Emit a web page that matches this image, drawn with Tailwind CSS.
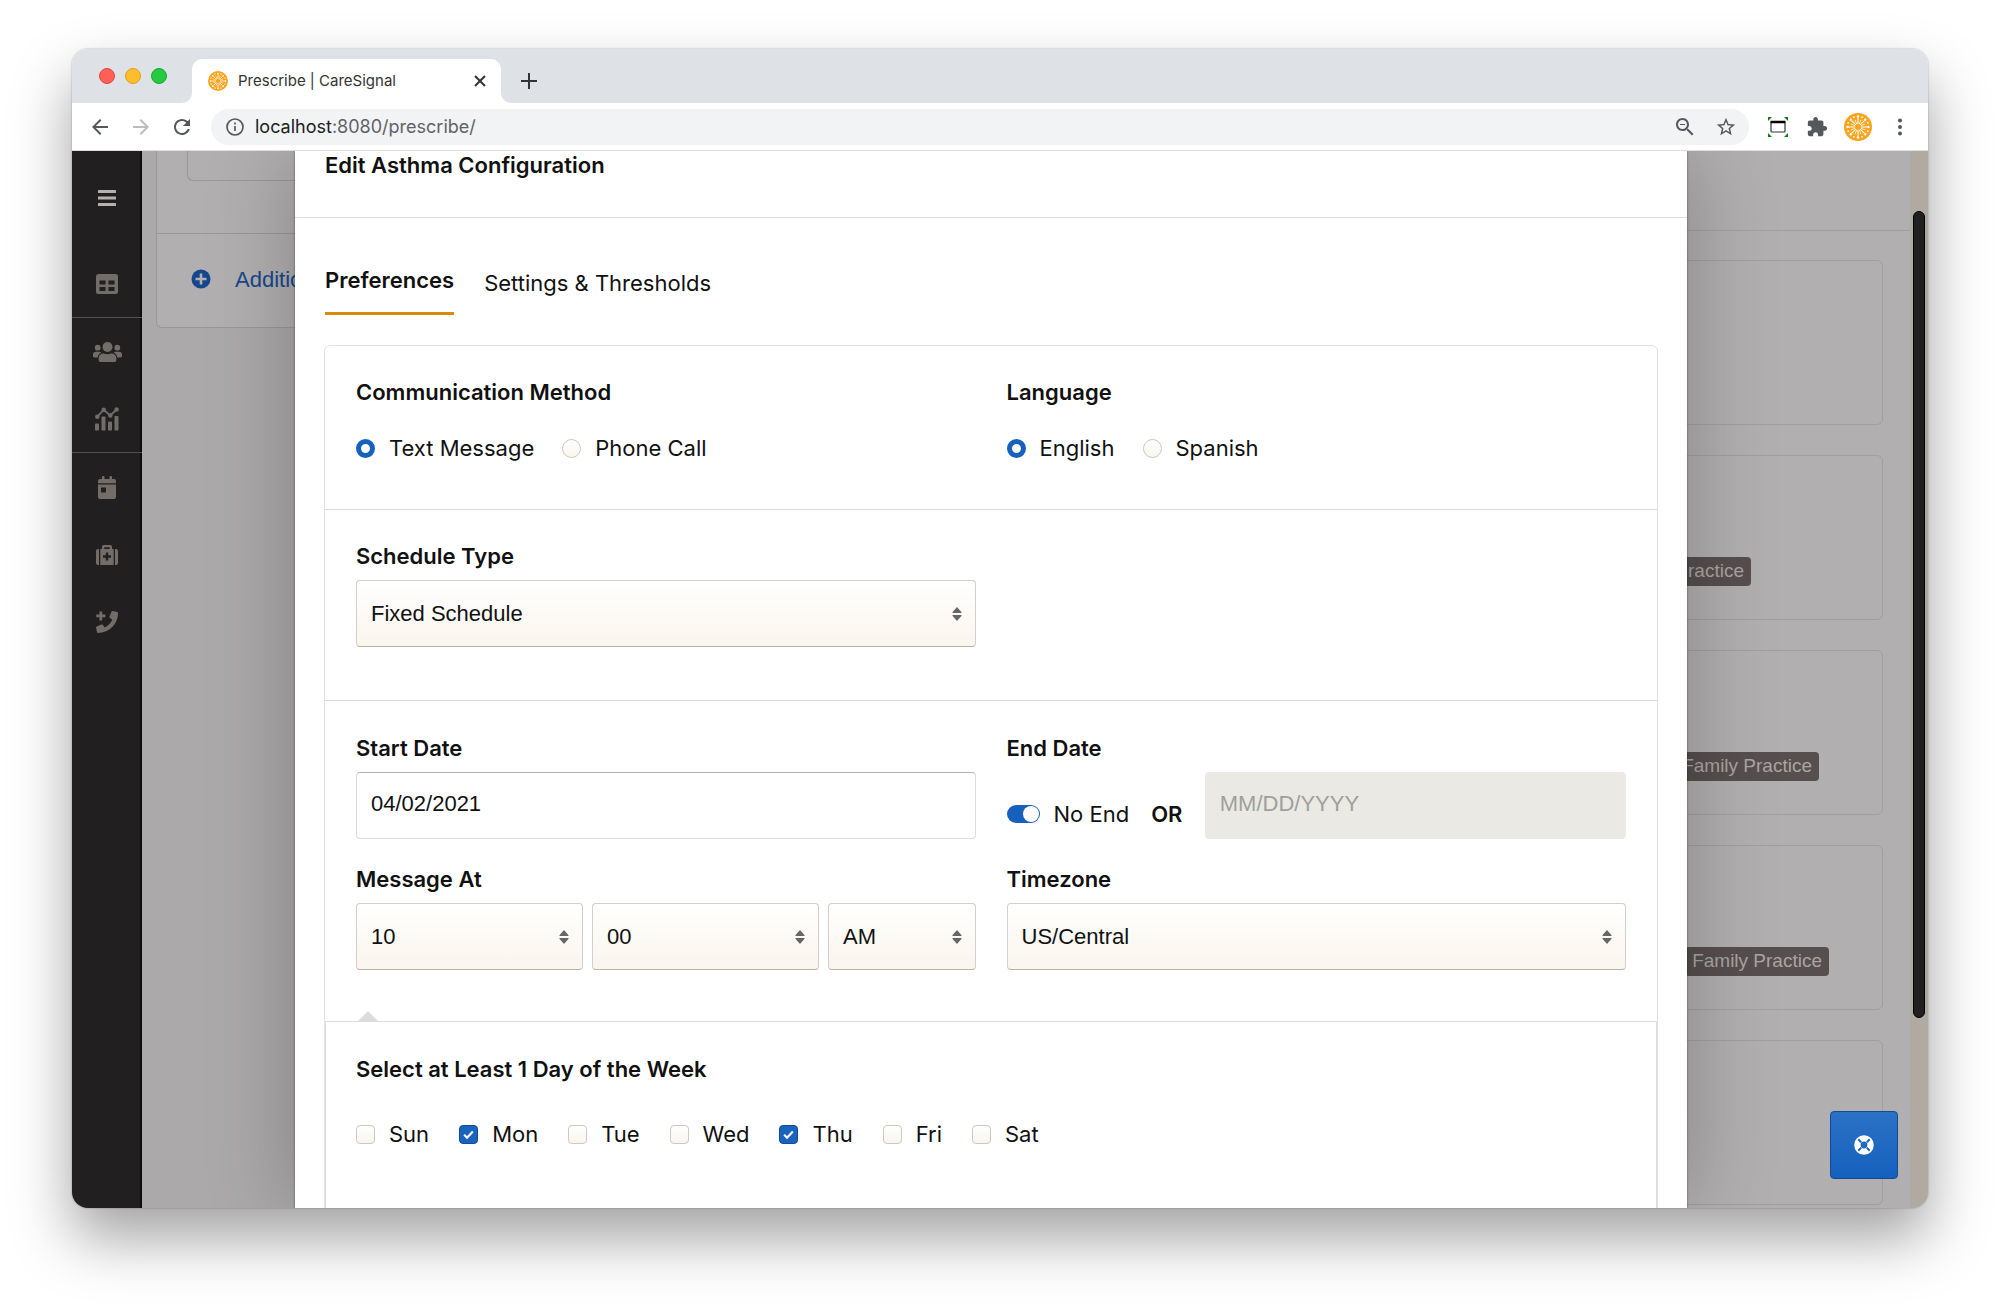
<!DOCTYPE html>
<html lang="en">
<head>
    <meta charset="UTF-8">
    <meta name="viewport" content="width=device-width, initial-scale=1.0">
    <title>Prescribe | CareSignal</title>
    <script src="https://cdn.jsdelivr.net/npm/@tailwindcss/browser@4"></script>
</head>
<body class="bg-white font-['Inter',sans-serif] text-[#111]">

    <!-- Shared icons -->
    <svg class="hidden">
        <symbol id="logo" viewBox="0 0 28 28">
            <circle cx="14" cy="14" r="14" fill="#fba31c"/>
            <path d="M14 4v7M14 17v7M4 14h7M17 14h7M7.600 7.600l4.300 4.300M16.100 16.100l4.300 4.300M20.400 7.600l-4.300 4.300M11.900 16.100l-4.300 4.300" stroke="#fff" stroke-width="1.100"/>
            <path d="M11 6.800l1.800 4.400M17 6.800l-1.800 4.400M11 21.200l1.800-4.400M17 21.200l-1.800-4.400M6.800 11l4.400 1.800M6.800 17l4.400-1.800M21.200 11l-4.400 1.800M21.200 17l-4.400-1.800" stroke="#fff" stroke-width=".8"/>
            <g fill="#fff">
                <circle cx="14" cy="3.500" r="1.200"/><circle cx="14" cy="24.500" r="1.200"/><circle cx="3.500" cy="14" r="1.200"/><circle cx="24.500" cy="14" r="1.200"/>
                <circle cx="6.800" cy="6.800" r="1.200"/><circle cx="21.200" cy="6.800" r="1.200"/><circle cx="6.800" cy="21.200" r="1.200"/><circle cx="21.200" cy="21.200" r="1.200"/>
                <circle cx="9.800" cy="4.200" r=".9"/><circle cx="18.200" cy="4.200" r=".9"/><circle cx="9.800" cy="23.800" r=".9"/><circle cx="18.200" cy="23.800" r=".9"/>
                <circle cx="4.200" cy="9.800" r=".9"/><circle cx="4.200" cy="18.200" r=".9"/><circle cx="23.800" cy="9.800" r=".9"/><circle cx="23.800" cy="18.200" r=".9"/>
            </g>
        </symbol>
        <symbol id="sort" viewBox="0 0 10 14">
            <path d="M5 0l4.600 5.200q.3.800-.6.800H1Q.1 6 .4 5.200zM5 14l4.600-5.200Q9.900 8 9 8H1q-.9 0-.6.800z" fill="#666"/>
        </symbol>
        <symbol id="check" viewBox="0 0 12 12">
            <path d="M2 6.300l2.700 2.700L10 3.300" fill="none" stroke="#fff" stroke-width="2"/>
        </symbol>
    </svg>

    <div class="min-h-screen flex flex-col px-18 pt-[49px] pb-24">
        <div class="flex-1 flex flex-col rounded-[16px] overflow-hidden shadow-[0_0_2px_rgba(0,0,0,0.35),0_30px_60px_rgba(0,0,0,0.37)]">

            <!-- Tab strip -->
            <div class="flex h-[54px] bg-white">
                <div class="flex items-center gap-2.5 w-[120px] pl-[27px] bg-[#dee1e6] rounded-br-[10px]">
                    <span class="size-4 rounded-full bg-[#ff5f57] border border-[#e2463f]"></span>
                    <span class="size-4 rounded-full bg-[#febc2e] border border-[#e1a116]"></span>
                    <span class="size-4 rounded-full bg-[#28c840] border border-[#12ac28]"></span>
                </div>
                <div class="w-[309px] pt-2.5 bg-[#dee1e6]">
                    <div class="flex items-center h-full pl-4 pr-3.5 bg-white rounded-t-[10px]">
                        <svg class="size-5 mr-2.5"><use href="#logo"/></svg>
                        <span class="text-[15px] text-[#333]">Prescribe | CareSignal</span>
                        <button class="ml-auto" aria-label="Close tab">
                            <svg class="size-3.5" viewBox="0 0 14 14" stroke="#333" stroke-width="2"><path d="M2 2l10 10M12 2L2 12"/></svg>
                        </button>
                    </div>
                </div>
                <div class="flex-1 flex items-center pt-2.5 pl-5 bg-[#dee1e6] rounded-bl-[10px]">
                    <button aria-label="New tab">
                        <svg class="size-4" viewBox="0 0 16 16" stroke="#333" stroke-width="2"><path d="M8 0v16M0 8h16"/></svg>
                    </button>
                </div>
            </div>

            <!-- Toolbar -->
            <div class="flex items-center gap-[17px] h-12 px-4 bg-white border-b border-[#dcdee0]">
                <button aria-label="Back"><svg class="size-6 block" viewBox="0 0 24 24" fill="#54585d"><path d="M20 11H7.830l5.590-5.590L12 4l-8 8 8 8 1.410-1.410L7.830 13H20v-2z"/></svg></button>
                <button aria-label="Forward"><svg class="size-6 block" viewBox="0 0 24 24" fill="#babcbe"><path d="M4 13h12.170l-5.590 5.590L12 20l8-8-8-8-1.410 1.410L16.170 11H4v2z"/></svg></button>
                <button aria-label="Reload"><svg class="size-6 block" viewBox="0 0 24 24" fill="#54585d"><path d="M17.650 6.350C16.200 4.900 14.210 4 12 4c-4.420 0-7.990 3.580-7.990 8s3.570 8 7.990 8c3.730 0 6.840-2.550 7.730-6h-2.080c-.82 2.330-3.040 4-5.650 4-3.310 0-6-2.690-6-6s2.690-6 6-6c1.660 0 3.140.69 4.220 1.780L13 11h7V4l-2.350 2.350z"/></svg></button>
                <div class="flex-1 flex items-center h-9 pl-3.5 pr-3 rounded-full bg-[#f1f3f4]">
                    <svg class="size-5 mr-2.5" viewBox="0 0 20 20" fill="none" stroke="#54585d" stroke-width="1.700"><circle cx="10" cy="10" r="8"/><path d="M10 9v5M10 5.600v1.800"/></svg>
                    <span class="text-[18px] text-[#5f6368]"><span class="text-[#202124]">localhost</span>:8080/prescribe/</span>
                    <svg class="size-6 ml-auto mr-4.5" viewBox="0 0 24 24" fill="#54585d"><path d="M15.500 14h-.79l-.28-.27C15.410 12.590 16 11.110 16 9.500 16 5.910 13.090 3 9.500 3S3 5.910 3 9.500 5.910 16 9.500 16c1.610 0 3.090-.59 4.230-1.570l.27.28v.79l5 4.990L20.490 19l-4.990-5zm-6 0C7.010 14 5 11.990 5 9.500S7.010 5 9.500 5 14 7.010 14 9.500 11.990 14 9.500 14zM7 9h5v1H7z"/></svg>
                    <svg class="size-[22px]" viewBox="0 0 24 24" fill="#54585d"><path d="M22 9.240l-7.190-.62L12 2 9.190 8.630 2 9.240l5.460 4.730L5.820 21 12 17.270 18.180 21l-1.630-7.030L22 9.240zM12 15.400l-3.760 2.270 1-4.280-3.320-2.880 4.380-.38L12 6.100l1.710 4.040 4.380.38-3.320 2.880 1 4.280L12 15.400z"/></svg>
                </div>
                <div class="flex items-center gap-4">
                    <svg class="size-6" viewBox="0 0 24 24"><path d="M2 2h4L2 6zM22 2h-4l4 4zM2 22h4l-4-4zM22 22h-4l4-4z" fill="#117a11"/><rect x="5" y="7" width="14" height="10" rx="1" fill="#fff" stroke="#333" stroke-width="1.200"/><path d="M4.500 7h15" stroke="#000" stroke-width="2.400"/></svg>
                    <svg class="size-5.5" viewBox="0 0 24 24" fill="#54585d"><path d="M20.500 11H19V7c0-1.100-.9-2-2-2h-4V3.500C13 2.120 11.880 1 10.500 1S8 2.120 8 3.500V5H4c-1.100 0-1.990.9-1.990 2v3.800H3.500c1.490 0 2.700 1.210 2.700 2.700s-1.210 2.700-2.700 2.700H2V20c0 1.100.9 2 2 2h3.800v-1.500c0-1.490 1.210-2.700 2.700-2.700 1.490 0 2.700 1.210 2.700 2.700V22H17c1.100 0 2-.9 2-2v-4h1.500c1.380 0 2.500-1.120 2.500-2.500S21.880 11 20.500 11z"/></svg>
                    <svg class="size-7"><use href="#logo"/></svg>
                    <button aria-label="Menu"><svg class="size-6 block" viewBox="0 0 24 24" fill="#54585d"><circle cx="12" cy="5.500" r="2"/><circle cx="12" cy="12" r="2"/><circle cx="12" cy="18.500" r="2"/></svg></button>
                </div>
            </div>

            <!-- Page -->
            <div class="relative flex-1 flex overflow-hidden bg-[#aba9aa]">
                <nav class="w-[70px] shrink-0 flex flex-col bg-[#221f20] shadow-[inset_-2px_0_0_#0c0b0b] text-[#736d6a]">
                    <a href="#" class="h-[94px] mb-1.5 grid place-items-center" aria-label="Menu">
                        <svg class="w-[18px] h-4" viewBox="0 0 18 16" fill="#b5b1b0"><rect width="18" height="3" rx=".5"/><rect y="6.500" width="18" height="3" rx=".5"/><rect y="13" width="18" height="3" rx=".5"/></svg>
                    </a>
                    <a href="#" class="h-[67px] grid place-items-center border-b border-[#555051]" aria-label="Dashboard">
                        <svg class="w-[22px] h-5" viewBox="0 0 22 20"><rect width="22" height="20" rx="2.500" fill="currentColor"/><path d="M3.500 6.500h6v4h-6zM12.500 6.500h6v4h-6zM3.500 13h6v4h-6zM12.500 13h6v4h-6z" fill="#221f20"/></svg>
                    </a>
                    <a href="#" class="h-[68px] grid place-items-center" aria-label="Patients">
                        <svg class="w-[29px] h-5" viewBox="0 0 29 20" fill="currentColor"><circle cx="14.500" cy="5" r="5"/><circle cx="4.700" cy="5.700" r="2.900"/><circle cx="24.300" cy="5.700" r="2.900"/><path d="M5.600 18v-1.500c0-3 2.300-5 5-5h.5c2.200 1 4.600 1 6.800 0h.5c2.700 0 5 2 5 5V18a2 2 0 0 1-2 2H7.600a2 2 0 0 1-2-2zM0 14v-1.500A3 3 0 0 1 3 9.700h3c1 0 1.600.3 2.300.9-2 1-3.300 2.700-3.600 4.900H1.300A1.400 1.400 0 0 1 0 14zM29 14v-1.500a3 3 0 0 0-3-2.800h-3c-1 0-1.600.3-2.300.9 2 1 3.300 2.700 3.600 4.900h3.400A1.400 1.400 0 0 0 29 14z"/></svg>
                    </a>
                    <a href="#" class="h-[67px] grid place-items-center border-b border-[#555051]" aria-label="Reports">
                        <svg class="size-6" viewBox="0 0 24 24" fill="currentColor"><rect y="16.500" width="4" height="7" rx=".8"/><rect x="6.500" y="9.500" width="4" height="14" rx=".8"/><rect x="13" y="14.500" width="4" height="9" rx=".8"/><rect x="19.500" y="9" width="4" height="14.500" rx=".8"/><circle cx="2.300" cy="9.700" r="2.200"/><circle cx="8.700" cy="2.800" r="2.200"/><circle cx="15.300" cy="8.500" r="2.200"/><circle cx="21.600" cy="2.500" r="2.200"/><path d="M2.300 9.700l6.400-6.900 6.600 5.700 6.300-6" fill="none" stroke="currentColor" stroke-width="1.800"/></svg>
                    </a>
                    <a href="#" class="h-[68px] grid place-items-center" aria-label="Calendar">
                        <svg class="w-[18px] h-[23px]" viewBox="0 0 18 23"><path d="M2 3h2V.7q0-.7.7-.7h1.100q.7 0 .7.700V3h5V.7q0-.7.7-.7h1.100q.7 0 .7.700V3h2a2 2 0 0 1 2 2v2.300H0V5a2 2 0 0 1 2-2zM0 8.500h18V21a2 2 0 0 1-2 2H2a2 2 0 0 1-2-2z" fill="currentColor"/><rect x="3" y="11.500" width="5" height="5" fill="#221f20"/></svg>
                    </a>
                    <a href="#" class="h-[67px] grid place-items-center" aria-label="Programs">
                        <svg class="w-[22px] h-5" viewBox="0 0 22 20"><path d="M0 6q0-2 2-2h1v16H2q-2 0-2-2zM22 6q0-2-2-2h-1v16h1q2 0 2-2zM4.300 4H6V1.800Q6 0 7.800 0h6.400Q16 0 16 1.800V4h1.700v16H4.300zM8.300 4h5.400V2.300H8.300z" fill="currentColor"/><path d="M9.800 7.500h2.400v2.800H15v2.400h-2.800v2.800H9.800v-2.800H7v-2.400h2.800z" fill="#221f20"/></svg>
                    </a>
                    <a href="#" class="h-[67px] grid place-items-center" aria-label="Calls">
                        <svg class="size-[22px]" viewBox="0 0 512 512" fill="currentColor"><path d="M493.400 24.600l-104-24c-11.300-2.600-22.900 3.300-27.500 13.900l-48 112c-4.200 9.800-1.400 21.300 6.900 28l60.600 49.600c-36 76.700-98.900 140.500-177.200 177.200l-49.600-60.600c-6.800-8.300-18.200-11.100-28-6.900l-112 48C3.900 366.500-2 378.100.6 389.400l24 104C27.100 504.200 36.700 512 48 512c256.100 0 464-207.500 464-464 0-11.200-7.700-20.900-18.600-23.400z"/><path d="M80 10h64v74h74v64h-74v74H80v-74H6V84h74z"/></svg>
                    </a>
                </nav>

                <!-- Page behind the dialog -->
                <div class="flex-1 pl-3.5 font-['Liberation_Sans',sans-serif]">
                    <div class="h-[177px] bg-[#b1afb0] border-x border-b border-[#999798] rounded-b-[6px]">
                        <div class="h-[83px] pl-[30px] border-b border-[#999798]">
                            <div class="h-[30px] border-l border-b border-[#999798] rounded-bl-[6px]"></div>
                        </div>
                        <a href="#" class="flex items-center gap-6 h-[90px] pl-[34px] text-[22px] text-[#16478c]">
                            <svg class="size-5" viewBox="0 0 20 20"><circle cx="10" cy="10" r="9.500" fill="#16478c"/><path d="M10 4.500v11M4.500 10h11" stroke="#b1afb0" stroke-width="2.600"/></svg>
                            Additional
                        </a>
                    </div>
                </div>
                <div class="flex-1 bg-[#b1afb0] font-['Liberation_Sans',sans-serif] text-[19px] text-[#aaa5a1]">
                    <div class="h-20 border-b border-[#a09e9f]"></div>
                    <div class="flex flex-col gap-[30px] pt-[29px] pr-[27px]">
                        <div class="h-[165px] rounded-[6px] border border-[#a09e9f]"></div>
                        <div class="h-[165px] rounded-[6px] border border-[#a09e9f] flex items-end justify-end pb-[33px] pr-[131px]">
                            <span class="px-[7px] pb-0.5 leading-[27px] rounded-[4px] bg-[#574f4f]">Family Practice</span>
                        </div>
                        <div class="h-[165px] rounded-[6px] border border-[#a09e9f] flex items-end justify-end pb-[33px] pr-[63px]">
                            <span class="px-[7px] pb-0.5 leading-[27px] rounded-[4px] bg-[#574f4f]">Family Practice</span>
                        </div>
                        <div class="h-[165px] rounded-[6px] border border-[#a09e9f] flex items-end justify-end pb-[33px] pr-[53px]">
                            <span class="px-[7px] pb-0.5 leading-[27px] rounded-[4px] bg-[#574f4f]">Family Practice</span>
                        </div>
                        <div class="h-[165px] rounded-[6px] border border-[#a09e9f]"></div>
                    </div>
                </div>
                <div class="w-[18px] shrink-0 bg-[#b0aaa3] pt-[60px] pl-[3px]">
                    <div class="w-3 h-[807px] rounded-full bg-[#221f20] border border-black"></div>
                </div>

                <!-- Edit dialog -->
                <div class="absolute inset-y-0 left-[223px] right-[241px] bg-white shadow-[0_0_2px_rgba(0,0,0,0.5),0_0_80px_rgba(0,0,0,0.25)]">
                    <div class="h-[67px] px-[30px] border-b border-[#dedede]">
                        <h1 class="text-[22px] leading-7 font-semibold">Edit Asthma Configuration</h1>
                    </div>
                    <div class="px-[29px]">
                        <div class="flex items-start gap-[30px] pt-11 pl-px mb-[30px] text-[22px]">
                            <button class="pb-3.5 leading-9 font-semibold border-b-3 border-[#d98a0b]">Preferences</button>
                            <button class="leading-[42px]">Settings &amp; Thresholds</button>
                        </div>

                        <form class="border border-[#e2e2e2] rounded-t-[6px] text-[22px] leading-7">
                            <section class="grid grid-cols-2 gap-[31px] px-[31px] pt-8 pb-[47px] border-b border-[#dcdcdc]">
                                <fieldset>
                                    <legend class="font-semibold">Communication Method</legend>
                                    <div class="flex gap-7 mt-7">
                                        <label class="flex items-center gap-3.5"><input type="radio" name="method" checked class="appearance-none size-[19px] rounded-full border border-[#ccc8c2] bg-linear-to-b from-white to-[#faf6f0] checked:border-[5px] checked:border-[#1661bd]">Text Message</label>
                                        <label class="flex items-center gap-3.5"><input type="radio" name="method" class="appearance-none size-[19px] rounded-full border border-[#ccc8c2] bg-linear-to-b from-white to-[#faf6f0] checked:border-[5px] checked:border-[#1661bd]">Phone Call</label>
                                    </div>
                                </fieldset>
                                <fieldset>
                                    <legend class="font-semibold">Language</legend>
                                    <div class="flex gap-7 mt-7">
                                        <label class="flex items-center gap-3.5"><input type="radio" name="language" checked class="appearance-none size-[19px] rounded-full border border-[#ccc8c2] bg-linear-to-b from-white to-[#faf6f0] checked:border-[5px] checked:border-[#1661bd]">English</label>
                                        <label class="flex items-center gap-3.5"><input type="radio" name="language" class="appearance-none size-[19px] rounded-full border border-[#ccc8c2] bg-linear-to-b from-white to-[#faf6f0] checked:border-[5px] checked:border-[#1661bd]">Spanish</label>
                                    </div>
                                </fieldset>
                            </section>

                            <section class="grid grid-cols-2 gap-[31px] px-[31px] pt-8 pb-[53px] border-b border-[#dcdcdc]">
                                <div>
                                    <label for="schedule" class="block font-semibold mb-2.5">Schedule Type</label>
                                    <div class="relative">
                                        <select id="schedule" class="block appearance-none w-full h-[67px] px-3.5 rounded-[4px] border border-[#d3cfca] border-b-[#b9b2a8] bg-linear-to-b from-white to-[#faf5ed] font-['Liberation_Sans',sans-serif] text-[22px]"><option>Fixed Schedule</option></select>
                                        <svg class="absolute right-3.5 top-[27px] w-2.5 h-3.5 pointer-events-none"><use href="#sort"/></svg>
                                    </div>
                                </div>
                            </section>

                            <section class="grid grid-cols-2 gap-x-[31px] gap-y-[26px] px-[31px] pt-[33px] pb-[51px]">
                                <div>
                                    <label for="start" class="block font-semibold mb-2.5">Start Date</label>
                                    <input id="start" type="text" value="04/02/2021" class="block w-full h-[67px] px-3.5 pb-1 rounded-[4px] border border-[#dcdcdc] border-t-[#b5b5b5] font-['Liberation_Sans',sans-serif] text-[22px]">
                                </div>
                                <div>
                                    <label for="end" class="block font-semibold mb-2.5">End Date</label>
                                    <div class="flex items-start">
                                        <label class="flex items-center gap-3.5 mt-7">
                                            <input type="checkbox" checked class="appearance-none w-[33px] h-[18px] rounded-full bg-[#1661bd] before:block before:size-4 before:m-px before:ml-4 before:rounded-full before:bg-white">No End
                                        </label>
                                        <strong class="mt-7 ml-5.5 font-semibold">OR</strong>
                                        <input id="end" type="text" disabled placeholder="MM/DD/YYYY" class="block w-[68%] ml-auto h-[67px] px-3.5 pb-1 rounded-[4px] border border-[#eae9e4] bg-[#eae9e4] font-['Liberation_Sans',sans-serif] text-[22px] placeholder:text-[#a09f9b]">
                                    </div>
                                </div>
                                <div>
                                    <label for="hour" class="block font-semibold mb-2.5">Message At</label>
                                    <div class="flex gap-[9px]">
                                        <div class="relative w-[227px]">
                                            <select id="hour" class="block appearance-none w-full h-[67px] px-3.5 rounded-[4px] border border-[#d3cfca] border-b-[#b9b2a8] bg-linear-to-b from-white to-[#faf5ed] font-['Liberation_Sans',sans-serif] text-[22px]"><option>10</option></select>
                                            <svg class="absolute right-3.5 top-[27px] w-2.5 h-3.5 pointer-events-none"><use href="#sort"/></svg>
                                        </div>
                                        <div class="relative w-[227px]">
                                            <select aria-label="Minute" class="block appearance-none w-full h-[67px] px-3.5 rounded-[4px] border border-[#d3cfca] border-b-[#b9b2a8] bg-linear-to-b from-white to-[#faf5ed] font-['Liberation_Sans',sans-serif] text-[22px]"><option>00</option></select>
                                            <svg class="absolute right-3.5 top-[27px] w-2.5 h-3.5 pointer-events-none"><use href="#sort"/></svg>
                                        </div>
                                        <div class="relative flex-1">
                                            <select aria-label="AM or PM" class="block appearance-none w-full h-[67px] px-3.5 rounded-[4px] border border-[#d3cfca] border-b-[#b9b2a8] bg-linear-to-b from-white to-[#faf5ed] font-['Liberation_Sans',sans-serif] text-[22px]"><option>AM</option></select>
                                            <svg class="absolute right-3.5 top-[27px] w-2.5 h-3.5 pointer-events-none"><use href="#sort"/></svg>
                                        </div>
                                    </div>
                                </div>
                                <div>
                                    <label for="timezone" class="block font-semibold mb-2.5">Timezone</label>
                                    <div class="relative">
                                        <select id="timezone" class="block appearance-none w-full h-[67px] px-3.5 rounded-[4px] border border-[#d3cfca] border-b-[#b9b2a8] bg-linear-to-b from-white to-[#faf5ed] font-['Liberation_Sans',sans-serif] text-[22px]"><option>US/Central</option></select>
                                        <svg class="absolute right-3.5 top-[27px] w-2.5 h-3.5 pointer-events-none"><use href="#sort"/></svg>
                                    </div>
                                </div>
                            </section>

                            <fieldset class="relative px-[30px] pb-20 border border-[#dcdcdc]">
                                <svg class="absolute left-[31px] -top-[11px] w-[22px] h-[11px]" viewBox="0 0 22 11"><path d="M11 0l11 11H0z" fill="#dcdcdc"/></svg>
                                <h2 class="pt-[33px] font-semibold">Select at Least 1 Day of the Week</h2>
                                <div class="flex gap-[30px] mt-[37px]">
                                    <label class="flex items-center gap-3.5"><input type="checkbox" class="appearance-none size-[19px] rounded-[4px] border border-[#ccc8c2] bg-linear-to-b from-white to-[#faf5ed]">Sun</label>
                                    <label class="relative flex items-center gap-3.5"><input type="checkbox" checked class="appearance-none size-[19px] rounded-[4px] border border-[#124c94] bg-[#1a64be]"><svg class="absolute left-[3px] size-[13px]"><use href="#check"/></svg>Mon</label>
                                    <label class="flex items-center gap-3.5"><input type="checkbox" class="appearance-none size-[19px] rounded-[4px] border border-[#ccc8c2] bg-linear-to-b from-white to-[#faf5ed]">Tue</label>
                                    <label class="flex items-center gap-3.5"><input type="checkbox" class="appearance-none size-[19px] rounded-[4px] border border-[#ccc8c2] bg-linear-to-b from-white to-[#faf5ed]">Wed</label>
                                    <label class="relative flex items-center gap-3.5"><input type="checkbox" checked class="appearance-none size-[19px] rounded-[4px] border border-[#124c94] bg-[#1a64be]"><svg class="absolute left-[3px] size-[13px]"><use href="#check"/></svg>Thu</label>
                                    <label class="flex items-center gap-3.5"><input type="checkbox" class="appearance-none size-[19px] rounded-[4px] border border-[#ccc8c2] bg-linear-to-b from-white to-[#faf5ed]">Fri</label>
                                    <label class="flex items-center gap-3.5"><input type="checkbox" class="appearance-none size-[19px] rounded-[4px] border border-[#ccc8c2] bg-linear-to-b from-white to-[#faf5ed]">Sat</label>
                                </div>
                            </fieldset>
                        </form>
                    </div>
                </div>

                <!-- Help button -->
                <button class="absolute right-[30px] bottom-[29px] size-17 grid place-items-center rounded-[4px] border border-[#104c96] bg-linear-to-b from-[#2b72c6] to-[#1560bd]" aria-label="Help">
                    <svg class="size-5" viewBox="0 0 20 20"><circle cx="10" cy="10" r="6.600" fill="none" stroke="#fff" stroke-width="6.400"/><path d="M4.200 4.200l3 3M15.800 4.200l-3 3M4.200 15.800l3-3M15.800 15.800l-3-3" stroke="#1e68c1" stroke-width="2"/></svg>
                </button>
            </div>
        </div>
    </div>

</body>
</html>
